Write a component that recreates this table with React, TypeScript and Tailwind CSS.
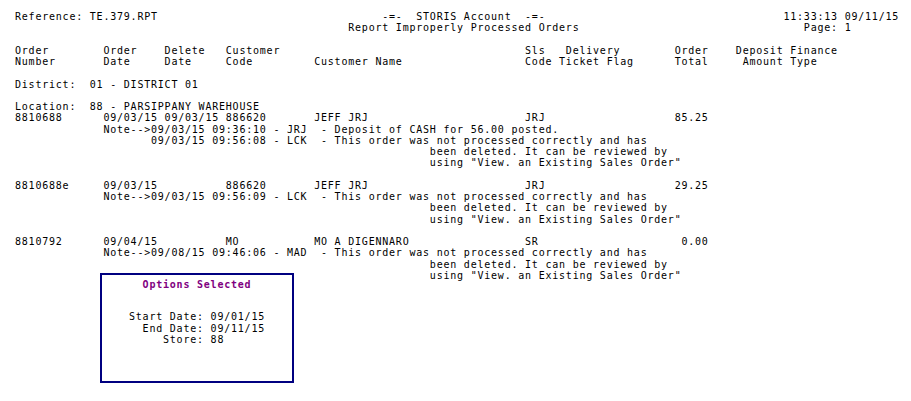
type Cell = [number, string];

// place each text at a fixed character column, like the printed report
const line = (...cells: Cell[]) => {
  let s = '';
  for (const [col, text] of cells) {
    s = s.padEnd(col, ' ') + text;
  }
  return s;
};

const DELETED = 'This order was not processed correctly and has';
const wrapLines = [
  line([61, 'been deleted. It can be reviewed by']),
  line([61, 'using "View. an Existing Sales Order"']),
];

const reportLines = [
  line([0, 'Reference: TE.379.RPT'], [54, '-=-  STORIS Account  -=-'], [113, '11:33:13 09/11/15']),
  line([49, 'Report Improperly Processed Orders'], [116, 'Page: 1']),
  '',
  line([0, 'Order'], [13, 'Order'], [22, 'Delete'], [31, 'Customer'], [75, 'Sls'], [81, 'Delivery'], [97, 'Order'], [106, 'Deposit'], [114, 'Finance']),
  line([0, 'Number'], [13, 'Date'], [22, 'Date'], [31, 'Code'], [44, 'Customer Name'], [75, 'Code'], [80, 'Ticket'], [87, 'Flag'], [97, 'Total'], [107, 'Amount'], [114, 'Type']),
  '',
  line([0, 'District:'], [11, '01 - DISTRICT 01']),
  '',
  line([0, 'Location:'], [11, '88 - PARSIPPANY WAREHOUSE']),
  line([0, '8810688'], [13, '09/03/15'], [22, '09/03/15'], [31, '886620'], [44, 'JEFF JRJ'], [75, 'JRJ'], [97, '85.25']),
  line([13, 'Note-->09/03/15 09:36:10 - JRJ'], [45, '- Deposit of CASH for 56.00 posted.']),
  line([20, '09/03/15 09:56:08 - LCK'], [45, '- ' + DELETED]),
  ...wrapLines,
  '',
  line([0, '8810688e'], [13, '09/03/15'], [31, '886620'], [44, 'JEFF JRJ'], [75, 'JRJ'], [97, '29.25']),
  line([13, 'Note-->09/03/15 09:56:09 - LCK'], [45, '- ' + DELETED]),
  ...wrapLines,
  '',
  line([0, '8810792'], [13, '09/04/15'], [31, 'MO'], [44, 'MO A DIGENNARO'], [75, 'SR'], [98, '0.00']),
  line([13, 'Note-->09/08/15 09:46:06 - MAD'], [45, '- ' + DELETED]),
  ...wrapLines,
];

const options: [string, string][] = [
  ['Start Date:', '09/01/15'],
  ['End Date:', '09/11/15'],
  ['Store:', '88'],
];

export default function App() {
  return (
    <div className="min-h-[401px] w-full bg-white pl-[15px] pt-[11px] font-['DejaVu_Sans_Mono',monospace] text-[10px] leading-[11.25px] tracking-[0.78px] text-black">
      <pre className="font-['DejaVu_Sans_Mono',monospace]">{reportLines.join('\n')}</pre>

      {/* Options box */}
      <div className="-mt-[8px] ml-[85px] h-[110px] w-[194px] border-2 border-[#000080] pt-[4px]">
        <div className="text-center font-bold text-[#800080]">Options Selected</div>
        <div className="mx-auto mt-[21px] grid w-fit grid-cols-[auto_auto] gap-x-[6.8px] leading-[11.5px]">
          {options.map(([label, value]) => (
            <div key={label} className="contents">
              <span className="text-right">{label}</span>
              <span>{value}</span>
            </div>
          ))}
        </div>
      </div>
    </div>
  );
}
